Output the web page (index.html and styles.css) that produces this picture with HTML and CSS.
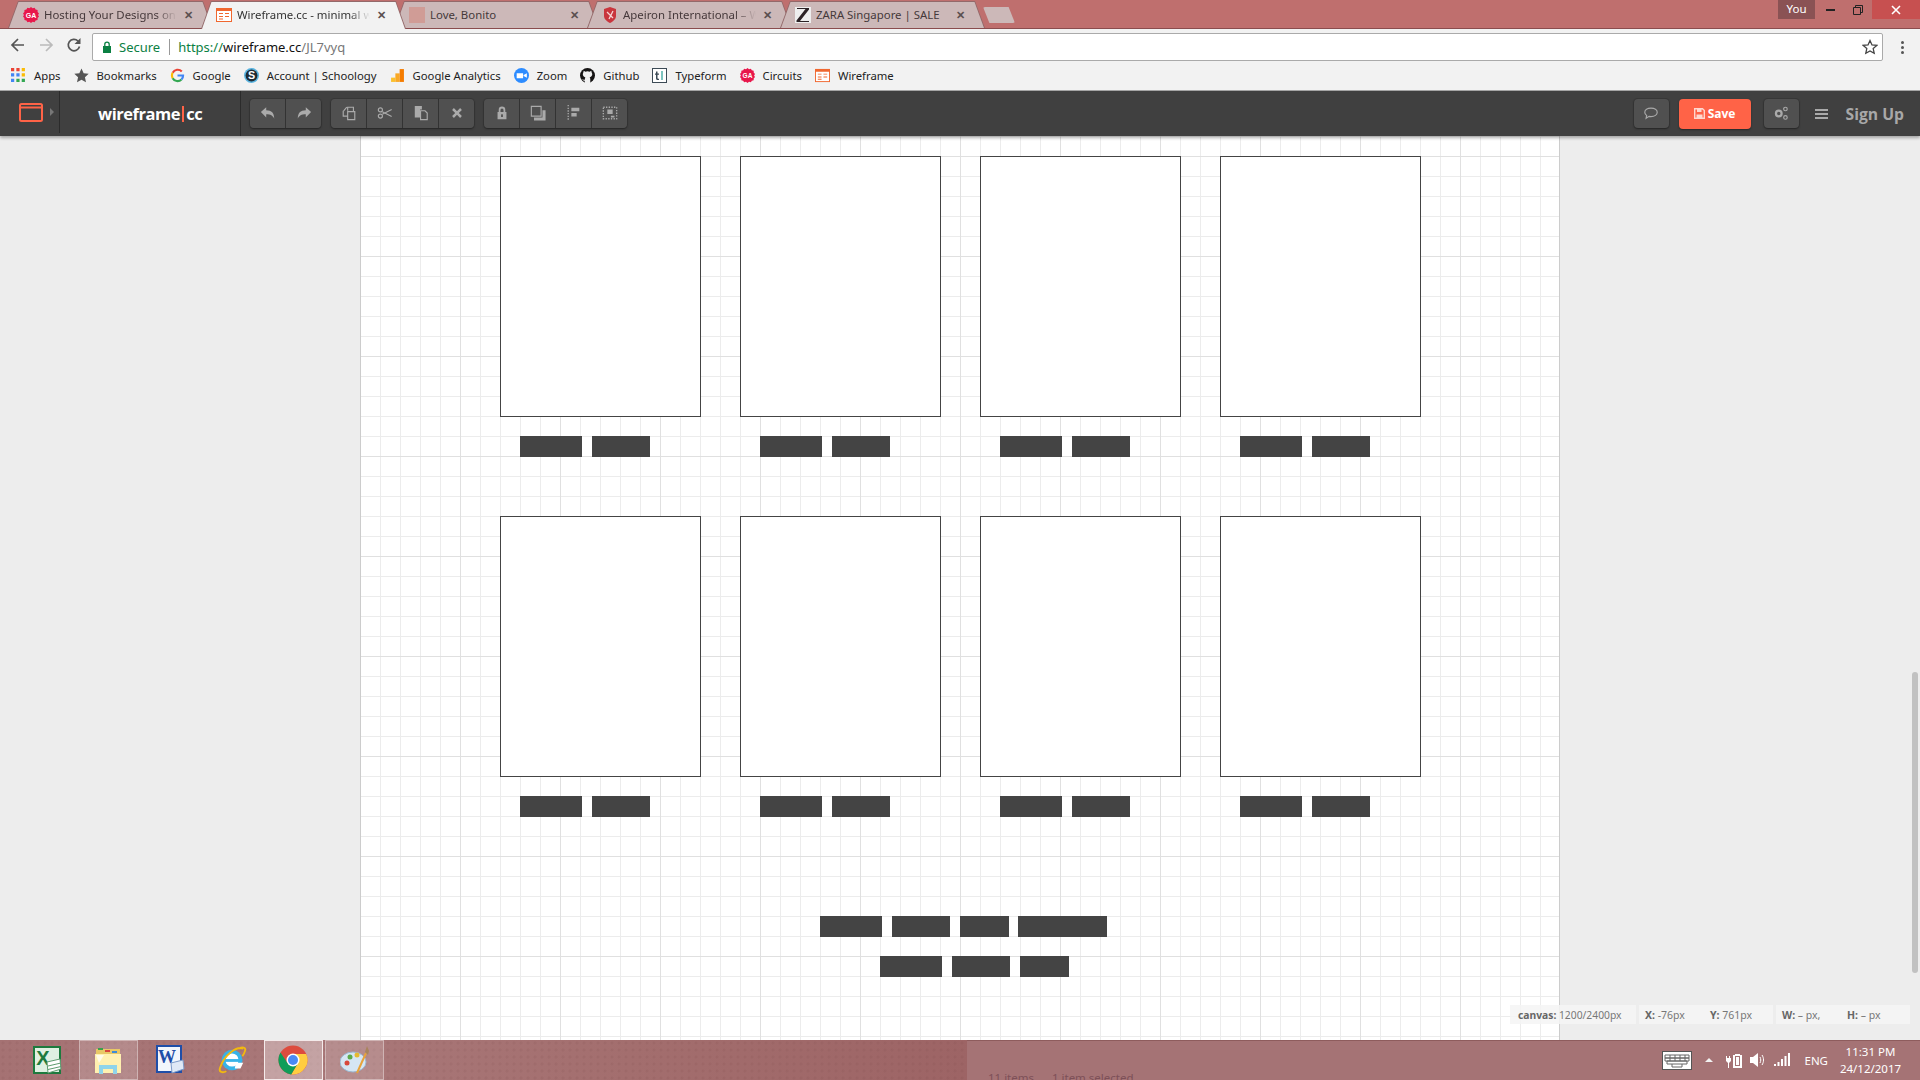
FILE: index.html
```html
<!DOCTYPE html>
<html lang="en">
<head>
    <meta charset="UTF-8">
    <title>Wireframe.cc - minimal wireframing tool</title>
    <link rel="stylesheet" href="styles.css">
</head>
<body>
    <div class="tabstrip">
        <div class="tab">
            <svg class="favicon" viewBox="0 0 16 16"><path fill="#e8174b" d="M8 0l1.600 1.300 2-.6 1 1.800 2 .4v2l1.400 1.500-1 1.600 1 1.600-1.400 1.500v2l-2 .4-1 1.800-2-.6L8 16l-1.600-1.300-2 .6-1-1.800-2-.4v-2L0 9.600l1-1.600-1-1.600 1.400-1.500v-2l2-.4 1-1.800 2 .6z"/><text x="8" y="11" class="badge-text">GA</text></svg>
            <span class="tab-title fade">Hosting Your Designs on</span>
            <span class="tab-close">✕</span>
        </div>
        <div class="tab active">
            <svg class="favicon" viewBox="0 0 16 16"><rect x=".5" y="1.500" width="15" height="13" fill="#fff" stroke="#f0672f"/><path fill="#f0672f" d="M0 1h16v3H0zM3 6h4v1H3zM9 6h4v1H9zM3 9h4v1H3zM9 9h4v1H9zM3 11.500h4v1H3z"/></svg>
            <span class="tab-title fade">Wireframe.cc - minimal w</span>
            <span class="tab-close">✕</span>
        </div>
        <div class="tab">
            <span class="favicon favicon-blank"></span>
            <span class="tab-title">Love, Bonito</span>
            <span class="tab-close">✕</span>
        </div>
        <div class="tab">
            <svg class="favicon" viewBox="0 0 16 16"><path fill="#c9353d" d="M2 2l6-2 6 2v7c0 3-3 5.500-6 7-3-1.500-6-4-6-7z"/><path fill="none" stroke="#f6d5d5" stroke-width="1.300" d="M5 5l6 6M11 4l-4 8"/></svg>
            <span class="tab-title fade">Apeiron International – W</span>
            <span class="tab-close">✕</span>
        </div>
        <div class="tab">
            <svg class="favicon" viewBox="0 0 16 16"><rect width="16" height="16" fill="#eee"/><path fill="#2c2226" d="M2 1h12v1.500L5 14h9v1H1.500v-1.500L10.500 2H2z"/></svg>
            <span class="tab-title">ZARA Singapore | SALE</span>
            <span class="tab-close">✕</span>
        </div>
        <div class="newtab"></div>
        <div class="window-controls">
            <span class="profile">You</span>
            <span class="win-btn"><svg width="9" height="2" viewBox="0 0 9 2"><rect width="9" height="2" fill="#222"/></svg></span>
            <span class="win-btn"><svg width="10" height="10" viewBox="0 0 10 10"><path fill="none" stroke="#222" d="M.5 2.500h7v7h-7zM2.500 2.500v-2h7v7h-2"/></svg></span>
            <span class="win-close"><svg width="10" height="10" viewBox="0 0 10 10"><path stroke="#fff" stroke-width="1.600" d="M1 1l8 8M9 1l-8 8"/></svg></span>
        </div>
    </div>

    <div class="navbar">
        <svg class="nav-icon" viewBox="0 0 16 16"><path fill="none" stroke="#555" stroke-width="1.700" d="M14 8H2.500M8 2L2 8l6 6"/></svg>
        <svg class="nav-icon" viewBox="0 0 16 16"><path fill="none" stroke="#bbb" stroke-width="1.700" d="M2 8h11.500M8 2l6 6-6 6"/></svg>
        <svg class="nav-icon" viewBox="0 0 16 16"><path fill="none" stroke="#555" stroke-width="1.700" d="M13.500 9.500A5.700 5.700 0 1 1 12 4"/><path fill="#555" d="M14.500 1v6h-6z"/></svg>
        <div class="omnibox">
            <svg class="lock" viewBox="0 0 10 12"><path fill="#0b8043" d="M1 5h8v7H1z"/><path fill="none" stroke="#0b8043" stroke-width="1.300" d="M2.800 5V3.300a2.200 2.200 0 0 1 4.400 0V5"/></svg>
            <span class="secure">Secure</span>
            <span class="url"><span class="url-scheme">https://</span>wireframe.cc<span class="url-path">/JL7vyq</span></span>
            <svg class="star" viewBox="0 0 16 16"><path fill="none" stroke="#444" stroke-width="1.300" d="M8 1.500l2 4.400 4.800.5-3.600 3.200 1 4.700L8 11.900l-4.200 2.400 1-4.700L1.200 6.400 6 5.900z"/></svg>
        </div>
        <div class="kebab"><i></i><i></i><i></i></div>
    </div>

    <div class="bookmarks">
        <a class="bookmark">
            <svg class="bm-icon" viewBox="0 0 14 14"><path fill="#ea4335" d="M0 0h3v3H0zM5 0h3v3H5z"/><path fill="#fbbc05" d="M10 0h3v3h-3zM10 5h3v3h-3z"/><path fill="#4285f4" d="M0 5h3v3H0zM5 5h3v3H5zM0 10h3v3H0z"/><path fill="#34a853" d="M5 10h3v3H5zM10 10h3v3h-3z"/></svg>Apps
        </a>
        <a class="bookmark">
            <svg class="bm-icon" viewBox="0 0 14 14"><path fill="#555" d="M7 .5l2 4.400 4.700.5-3.500 3.200 1 4.700L7 11l-4.200 2.300 1-4.700L.3 5.400 5 4.900z"/></svg>Bookmarks
        </a>
        <a class="bookmark">
            <svg class="bm-icon" viewBox="0 0 14 14"><path fill="none" stroke="#ea4335" stroke-width="2" d="M11 3.300A5.200 5.200 0 0 0 2.500 4.500"/><path fill="none" stroke="#fbbc05" stroke-width="2" d="M2.500 4.500a5.200 5.200 0 0 0 0 5"/><path fill="none" stroke="#34a853" stroke-width="2" d="M2.500 9.500a5.200 5.200 0 0 0 8.200 1.300"/><path fill="none" stroke="#4285f4" stroke-width="2" d="M10.700 10.800A5.200 5.200 0 0 0 12.200 7H7"/></svg>Google
        </a>
        <a class="bookmark">
            <svg class="bm-icon" viewBox="0 0 14 14"><circle cx="7" cy="7" r="7" fill="#5ab4e0"/><circle cx="7" cy="7" r="5.500" fill="#1f2a33"/><text x="7" y="10.500" class="s-text">S</text></svg>Account | Schoology
        </a>
        <a class="bookmark">
            <svg class="bm-icon" viewBox="0 0 14 14"><path fill="#fbc02d" d="M1 9h4v4H1z"/><path fill="#f9a825" d="M5 5h4v8H5z"/><path fill="#f57c00" d="M9 1h4v12H9z"/></svg>Google Analytics
        </a>
        <a class="bookmark">
            <svg class="bm-icon" viewBox="0 0 14 14"><circle cx="7" cy="7" r="7" fill="#2d8cff"/><path fill="#fff" d="M2.500 5h6v4.500h-6zM9 6.500l3-1.500v4L9 7.500z"/></svg>Zoom
        </a>
        <a class="bookmark">
            <svg class="bm-icon" viewBox="0 0 14 14"><circle cx="7" cy="7" r="7" fill="#161414"/><path fill="#f1f1f1" d="M3.500 2.500L5 3.500a5 5 0 0 1 4 0l1.500-1 .5 2c1 1.500.5 3.500-2 4.300.5.500.6 1 .6 2V14H4.400v-2.200c-1.400.2-2-.8-2.400-1.600.8.400 1.500 1.200 2.400.8 0-.6.200-1.300.600-2.200C2.500 8 2.200 6 3 4.500z"/></svg>Github
        </a>
        <a class="bookmark">
            <svg class="bm-icon" viewBox="0 0 15 15"><rect x=".5" y=".5" width="14" height="14" fill="#fff" stroke="#3c4a55"/><path fill="#3c4a55" d="M4 3.500h1.500v2H7v1.200H5.500V10c0 .6.400.8 1.500.7V12c-2 .2-3-.3-3-1.800V6.700H3V5.500h1z"/><path fill="#7cc4bf" d="M9 3h2v9H9z"/></svg>Typeform
        </a>
        <a class="bookmark">
            <svg class="bm-icon" viewBox="0 0 16 16"><path fill="#e8174b" d="M8 0l1.600 1.300 2-.6 1 1.800 2 .4v2l1.400 1.500-1 1.600 1 1.600-1.400 1.500v2l-2 .4-1 1.800-2-.6L8 16l-1.600-1.300-2 .6-1-1.800-2-.4v-2L0 9.600l1-1.600-1-1.600 1.400-1.500v-2l2-.4 1-1.800 2 .6z"/><text x="8" y="11" class="badge-text">GA</text></svg>Circuits
        </a>
        <a class="bookmark">
            <svg class="bm-icon" viewBox="0 0 16 16"><rect x=".5" y="1.500" width="15" height="13" fill="#fff" stroke="#f0672f"/><path fill="#f0672f" d="M0 1h16v3H0zM3 6h4v1H3zM9 6h4v1H9zM3 9h4v1H3zM9 9h4v1H9zM3 11.500h4v1H3z"/></svg>Wireframe
        </a>
    </div>

    <div class="toolbar">
        <div class="logo-cell">
            <svg class="logo-icon" width="24" height="19" viewBox="0 0 24 19"><path fill="none" stroke="#ff6347" stroke-width="2" d="M1 2.500a1.500 1.500 0 0 1 1.500-1.500h19a1.500 1.500 0 0 1 1.500 1.500v14a1.500 1.500 0 0 1-1.500 1.500h-19a1.500 1.500 0 0 1-1.500-1.500zM1 4.500h22"/></svg>
            <span class="logo-arrow"></span>
        </div>
        <div class="brand"><b>wireframe</b><span class="brand-bar"></span><b>cc</b></div>
        <div class="tool-group group-two">
            <span class="tool"><svg viewBox="0 0 18 18"><path d="M1 8l6-5.500V6c6 0 9 3 9 9.500-1.500-3.500-4-5-9-5V14z"/></svg></span>
            <span class="tool"><svg viewBox="0 0 18 18"><path d="M17 8l-6-5.500V6c-6 0-9 3-9 9.500 1.500-3.500 4-5 9-5V14z"/></svg></span>
        </div>
        <div class="tool-group">
            <span class="tool"><svg viewBox="0 0 18 18"><path class="line" d="M7.500 6.500V2.500h4l2.500 0v5M3 6.500l3.500-4M7.500 7.500H13.500l2 0v9H7.500zM7.500 12.500H2.500V6.500"/></svg></span>
            <span class="tool"><svg viewBox="0 0 18 18"><path class="line" d="M6 7.500L16.500 13M6 10.500L16.500 5"/><circle class="line" cx="3.800" cy="5.500" r="2.300"/><circle class="line" cx="3.800" cy="12.500" r="2.300"/></svg></span>
            <span class="tool"><svg viewBox="0 0 18 18"><path d="M2 1h8v4H8v9H2z"/><path class="line" d="M8.500 6.500h5l2.500 2.500v7.500H8.500z"/></svg></span>
            <span class="tool"><svg viewBox="0 0 18 18"><path d="M5.500 3.500L9 7l3.500-3.500 2 2L11 9l3.500 3.500-2 2L9 11l-3.500 3.500-2-2L7 9 3.500 5.500z"/></svg></span>
        </div>
        <div class="tool-group">
            <span class="tool"><svg viewBox="0 0 18 18"><path d="M4 8h10v8H4z"/><path class="line thick" d="M6.300 8V5.500a2.700 2.700 0 0 1 5.400 0V8"/><rect x="8" y="10.500" width="2" height="3" fill="#505050"/></svg></span>
            <span class="tool"><svg viewBox="0 0 18 18"><path class="line" d="M1.500 1.500h11v11h-11z"/><path d="M14 6h3.500v11.500h-13V14H14z"/></svg></span>
            <span class="tool"><svg viewBox="0 0 18 18"><path d="M6 3h9v4H6zM6 9h6v4H6z"/><path class="line dotted" d="M2.500 0v18"/></svg></span>
            <span class="tool"><svg viewBox="0 0 18 18"><path class="line dotted" d="M1.500 2.500h15v13h-15z"/><path d="M6 5h6v5H6zM10 12h4v2h-4z"/></svg></span>
        </div>
        <div class="toolbar-right">
            <span class="tool tool-solo"><svg viewBox="0 0 18 18"><path class="line" d="M9 3.500c4 0 7 2 7 4.700S13 13 9 13c-.8 0-1.500 0-2.200-.2L3.500 15l.6-3.300C2.800 11 2 9.700 2 8.200 2 5.500 5 3.500 9 3.500z"/></svg></span>
            <span class="save-btn">
                <svg width="11" height="11" viewBox="0 0 11 11"><path fill="none" stroke="#ffd8cf" stroke-width="1.400" d="M.7.7h7.800l1.800 1.800v7.800H.7z"/><path fill="#ffd8cf" d="M3 1h4.500v3H3zM2.500 6.500h6V10h-6z"/></svg>Save
            </span>
            <span class="tool tool-solo"><svg viewBox="0 0 18 18"><circle cx="6.500" cy="9.500" r="3.200" fill="none" stroke="#aaa" stroke-width="2.500"/><circle class="line" cx="14" cy="4.500" r="2"/><circle class="line" cx="14" cy="14" r="2"/></svg></span>
            <span class="hamburger"><i></i><i></i><i></i></span>
            <span class="signup">Sign Up</span>
        </div>
    </div>

    <div class="workspace">
        <div class="canvas">
            <div class="card-grid">
                <div class="cell"><div class="card"></div><div class="btn-row"><span class="bar w62"></span><span class="bar w58"></span></div></div>
                <div class="cell"><div class="card"></div><div class="btn-row"><span class="bar w62"></span><span class="bar w58"></span></div></div>
                <div class="cell"><div class="card"></div><div class="btn-row"><span class="bar w62"></span><span class="bar w58"></span></div></div>
                <div class="cell"><div class="card"></div><div class="btn-row"><span class="bar w62"></span><span class="bar w58"></span></div></div>
                <div class="cell"><div class="card"></div><div class="btn-row"><span class="bar w62"></span><span class="bar w58"></span></div></div>
                <div class="cell"><div class="card"></div><div class="btn-row"><span class="bar w62"></span><span class="bar w58"></span></div></div>
                <div class="cell"><div class="card"></div><div class="btn-row"><span class="bar w62"></span><span class="bar w58"></span></div></div>
                <div class="cell"><div class="card"></div><div class="btn-row"><span class="bar w62"></span><span class="bar w58"></span></div></div>
            </div>
            <div class="footer-row first">
                <span class="bar w62"></span><span class="bar w58"></span><span class="bar w49"></span><span class="bar w89"></span>
            </div>
            <div class="footer-row second">
                <span class="bar w62"></span><span class="bar w58"></span><span class="bar w49"></span>
            </div>
        </div>
        <div class="scroll-thumb"></div>
        <div class="status">
            <span class="chip chip-canvas"><b>canvas:</b> 1200/2400px</span>
            <span class="chip chip-pair"><span class="stat"><b>X:</b> -76px</span><span><b>Y:</b> 761px</span></span>
            <span class="chip chip-pair"><span class="stat"><b>W:</b> – px,</span><span><b>H:</b> – px</span></span>
        </div>
    </div>

    <div class="taskbar">
        <div class="task-left">
            <span class="task-item">
                <svg viewBox="0 0 30 30"><path fill="#1d7a3e" d="M1 1h28v28H1z"/><path fill="#dff0e2" d="M3 3h24v24H3z"/><text x="11" y="20" class="excel-text">X</text><path fill="#fff" stroke="#5e9c70" d="M15 17l13-3 1 10-13 4z"/><path stroke="#5e9c70" d="M16 21l13-3M16 24.500l13-3"/></svg>
            </span>
            <span class="task-item open">
                <svg viewBox="0 0 30 30"><path fill="#e8c866" d="M3 4h24v8H3z"/><path fill="#3aa04b" d="M5 3h5v2H5z"/><path fill="#d8463c" d="M12 5h5v2h-5z"/><path fill="#3d8cd8" d="M19 6h5v2h-5z"/><path fill="#fff0b0" d="M2 9h26v19H2z"/><path fill="#8fd4ea" d="M6 20h18v9h-4v-5H10v5H6z"/><path fill="#fff" opacity=".7" d="M3 10l8 0-5 8z"/></svg>
            </span>
            <span class="task-item">
                <svg viewBox="0 0 30 30"><path fill="#1f4ea8" d="M1 0h26v28H1z"/><path fill="#f2f6fc" d="M3 2h22v24H3z"/><text x="12" y="18" class="word-text">W</text><path fill="#dfe9f6" stroke="#7d9bc8" d="M16 18l12-3 1 9-12 4z"/></svg>
            </span>
            <span class="task-item">
                <svg viewBox="0 0 32 30"><circle cx="16" cy="15" r="11" fill="#37b3e8"/><circle cx="16" cy="15" r="7" fill="#fff"/><path fill="#37b3e8" d="M7 14h20v3H7z"/><path fill="#fff" d="M20 18h8l-3 6h-6z"/><path fill="none" stroke="#f2b90f" stroke-width="2" d="M28 3C22 0 8 8 3 24c-1 4 3 5 7 3M23 3c4-2 8-2 7 2-.5 2-1.500 4-3 6"/></svg>
            </span>
            <span class="task-item active">
                <svg viewBox="0 0 30 30"><circle cx="15" cy="15" r="14.500" fill="#dd4b3e"/><path fill="#ffcd40" d="M15 9h13.200a14.500 14.500 0 0 1-15 20.400L20 18z"/><path fill="#0f9d58" d="M2.500 7.500A14.500 14.500 0 0 0 13.200 29.400L20 18l-5 3-5.500-3z"/><circle cx="15" cy="15" r="6.500" fill="#fff"/><circle cx="15" cy="15" r="5" fill="#4a8af4"/></svg>
            </span>
            <span class="task-item open">
                <svg viewBox="0 0 30 30"><ellipse cx="13" cy="17" rx="13" ry="10" fill="#d5e6f3" stroke="#9cb8d0"/><circle cx="7" cy="18" r="2.500" fill="#d8483c"/><circle cx="10" cy="12" r="2.500" fill="#5caa4a"/><circle cx="17" cy="10" r="2.500" fill="#e5b92f"/><path stroke="#e8a33a" stroke-width="2" d="M17 28L26 8"/><path fill="#a9845d" d="M25 7l2-6 2 5-1 4z"/></svg>
            </span>
        </div>
        <div class="task-right">
            <span class="explorer-status">11 items &nbsp;&nbsp;&nbsp;&nbsp; 1 item selected</span>
            <div class="tray">
                <svg class="tray-keyboard" viewBox="0 0 30 19"><rect x=".5" y=".5" width="29" height="18" fill="#fff" stroke="#555"/><path fill="none" stroke="#666" d="M3 4h24v3H3zM3 7h24v3H3zM5 10h20v3H5zM8 4v6M13 4v6M18 4v6M23 4v6M10 13v3h10v-3"/></svg>
                <span class="tray-arrow"></span>
                <svg class="tray-icon" viewBox="0 0 16 16"><path fill="#fff" d="M9 2h5v1h2v13H7V3h2z"/><path fill="#a57375" d="M9 4h5v10H9z"/><path fill="#fff" d="M10 5h3v8h-3zM0 4h1v2h2V4h1v2h1v3L3 11v5H2v-5L0 9V6z"/></svg>
                <svg class="tray-icon" viewBox="0 0 16 16"><path fill="#fff" d="M0 5h3l5-4v14l-5-4H0z"/><path fill="none" stroke="#fff" d="M10 5c1 2 1 4 0 6M12 3c2 3 2 7 0 10"/></svg>
                <svg class="tray-icon" viewBox="0 0 16 16"><path fill="#fff" d="M0 12h2v2H0zM3.500 10h2v4h-2zM7 7h2v7H7zM10.500 4h2v10h-2zM14 1h2v13h-2z"/></svg>
                <span class="tray-lang">ENG</span>
                <span class="clock"><span>11:31 PM</span><span>24/12/2017</span></span>
            </div>
        </div>
    </div>
</body>
</html>
```

FILE: styles.css
```css
* {
    box-sizing: border-box;
}
html, body {
    margin: 0;
    height: 100%;
}
body {
    width: 1920px;
    height: 1080px;
    display: flex;
    flex-direction: column;
    overflow: hidden;
    font-family: "Noto Sans", "Open Sans", sans-serif;
    color: #222;
    background: #ededed;
}

/* tab strip */
.tabstrip {
    height: 29px;
    flex: none;
    display: flex;
    align-items: flex-start;
    padding: 1px 0 0 8px;
    background: #bf6f6e;
    border-bottom: 1px solid #8a4c4e;
}
.tab {
    position: relative;
    width: 205px;
    height: 27px;
    margin-right: -12px;
    padding: 0 15px;
    display: flex;
    align-items: center;
    flex: none;
    font-size: 11.400px;
    color: #45383a;
}
.tab::before, .tab::after {
    content: "";
    position: absolute;
    inset: 0;
    z-index: 0;
}
.tab::before {
    background: #93696a;
    clip-path: polygon(10px 0, calc(100% - 10px) 0, 100% 100%, 0 100%);
}
.tab::after {
    background: #ccb8b8;
    clip-path: polygon(10.500px 1px, calc(100% - 10.500px) 1px, calc(100% - 1px) 100%, 1px 100%);
}
.tab > * {
    position: relative;
    z-index: 1;
}
.tab.active {
    height: 28px;
    padding-bottom: 1px;
    z-index: 2;
    color: #333;
}
.tab.active::after {
    background: #f2f2f2;
}
.favicon {
    width: 16px;
    height: 16px;
    flex: none;
    margin-right: 5px;
}
.favicon-blank {
    background: #d09c96;
}
.badge-text {
    font: bold 7px "Liberation Sans", sans-serif;
    fill: #fff;
    text-anchor: middle;
}
.tab-title {
    width: 133px;
    flex: none;
    white-space: nowrap;
    overflow: hidden;
}
.tab-title.fade {
    -webkit-mask-image: linear-gradient(to right, #000 84%, transparent 100%);
    mask-image: linear-gradient(to right, #000 84%, transparent 100%);
}
.tab-close {
    margin-left: 7px;
    font-size: 11px;
    font-weight: bold;
    color: #5a5050;
}
.newtab {
    width: 32px;
    height: 16px;
    margin: 6px 0 0 10px;
    flex: none;
    background: #ccb8b8;
    clip-path: polygon(0 0, 80% 0, 100% 100%, 20% 100%);
    border-radius: 2px;
}
.window-controls {
    margin: -1px 0 0 auto;
    display: flex;
    align-items: center;
    height: 19px;
}
.profile {
    width: 37px;
    height: 19px;
    margin-right: 2px;
    text-align: center;
    font-size: 11.500px;
    line-height: 18px;
    color: #fff;
    background: #8a5254;
}
.win-btn {
    width: 27px;
    display: flex;
    justify-content: center;
}
.win-close {
    width: 48px;
    height: 19px;
    margin-left: 1px;
    display: flex;
    align-items: center;
    justify-content: center;
    background: #c75050;
}

/* address row */
.navbar {
    height: 32px;
    flex: none;
    display: flex;
    align-items: center;
    padding-left: 10px;
    background: #f2f2f2;
}
.nav-icon {
    width: 16px;
    height: 16px;
    margin-right: 12px;
    flex: none;
}
.omnibox {
    width: 1791px;
    height: 28px;
    margin: 4px 0 0 -2px;
    padding: 0 4px 0 9px;
    display: flex;
    align-items: center;
    font-size: 13px;
    background: #fff;
    border: 1px solid #aaa;
    border-radius: 2px;
}
.lock {
    width: 10px;
    height: 12px;
    margin-right: 7px;
}
.secure {
    padding-right: 9px;
    margin-right: 8px;
    color: #0b8043;
    border-right: 1px solid #999;
    line-height: 16px;
}
.url {
    flex: 1;
    color: #111;
}
.url-scheme {
    color: #0b8043;
}
.url-path {
    color: #777;
}
.star {
    width: 16px;
    height: 16px;
}
.kebab {
    margin: 4px 0 0 18px;
    display: flex;
    flex-direction: column;
    gap: 2px;
}
.kebab i {
    width: 3px;
    height: 3px;
    border-radius: 50%;
    background: #555;
}

/* bookmarks */
.bookmarks {
    height: 30px;
    flex: none;
    display: flex;
    align-items: center;
    gap: 13px;
    padding-left: 11px;
    background: #f2f2f2;
    border-bottom: 1px solid #a8a8a8;
    font-size: 11.300px;
    color: #222;
}
.bookmark {
    display: flex;
    align-items: center;
    gap: 8px;
}
.bm-icon {
    width: 15px;
    height: 15px;
    flex: none;
}
.s-text {
    font: bold 10px "Liberation Sans", sans-serif;
    fill: #fff;
    text-anchor: middle;
}
.word-text {
    font: bold 18px "Liberation Serif", serif;
    fill: #1f4ea8;
    text-anchor: middle;
}
.excel-text {
    font: bold 20px "Liberation Sans", sans-serif;
    fill: #1d7a3e;
    text-anchor: middle;
}

/* app toolbar */
.toolbar {
    position: relative;
    z-index: 3;
    height: 45px;
    flex: none;
    display: flex;
    align-items: center;
    background: #404040;
    box-shadow: 0 2px 3px rgba(0, 0, 0, .3);
}
.logo-cell {
    width: 60px;
    height: 42px;
    margin-top: -3px;
    padding-left: 19px;
    flex: none;
    display: flex;
    align-items: center;
    border-right: 1px solid #2b2b2b;
}
.logo-arrow {
    width: 0;
    height: 0;
    margin-left: 7px;
    border-left: 4px solid #777;
    border-top: 4px solid transparent;
    border-bottom: 4px solid transparent;
}
.brand {
    width: 181px;
    height: 45px;
    flex: none;
    padding-left: 38px;
    display: flex;
    align-items: center;
    font-family: "Open Sans", sans-serif;
    font-size: 16.500px;
    letter-spacing: -.45px;
    color: #fff;
    border-right: 1px solid #2b2b2b;
}
.brand-bar {
    width: 2px;
    height: 16px;
    margin: 0 2px;
    background: #ff6347;
}
.tool-group {
    width: 143px;
    margin-left: 10px;
    display: flex;
    border-radius: 4px;
    overflow: hidden;
    box-shadow: 0 1px 2px #262626, 0 0 0 1px #383838;
}
.group-two {
    width: 71px;
    margin-left: 9px;
}
.tool {
    flex: 1;
    height: 29px;
    display: flex;
    align-items: center;
    justify-content: center;
    background: #505050;
    border-right: 1px solid #333;
}
.tool:last-child {
    border-right: 0;
}
.tool svg {
    width: 16px;
    height: 16px;
    margin-top: -1px;
    fill: #aaa;
}
.tool .line {
    fill: none;
    stroke: #aaa;
    stroke-width: 1.300;
}
.tool .thick {
    stroke-width: 2;
}
.tool .dotted {
    stroke-width: 1.500;
    stroke-dasharray: 1.500 1.500;
}
.toolbar-right {
    margin-left: auto;
    display: flex;
    align-items: center;
}
.tool-solo {
    flex: none;
    width: 35px;
    border-right: 0;
    border-radius: 4px;
    box-shadow: 0 1px 2px #262626, 0 0 0 1px #383838;
}
.save-btn {
    width: 72px;
    height: 30px;
    margin: 0 13px 0 10px;
    display: flex;
    align-items: center;
    justify-content: center;
    gap: 3px;
    font-family: "Open Sans", sans-serif;
    font-size: 12px;
    font-weight: 700;
    color: #fff;
    background: #ff6347;
    border-radius: 4px;
    box-shadow: 0 1px 2px #262626;
}
.hamburger {
    margin-left: 16px;
    display: flex;
    flex-direction: column;
    gap: 2px;
}
.hamburger i {
    width: 13px;
    height: 2px;
    background: #aaa;
}
.signup {
    margin: 0 16px 0 18px;
    font-family: "Open Sans", sans-serif;
    font-size: 15.700px;
    font-weight: 700;
    color: #a8a8a8;
}

/* workspace */
.workspace {
    position: relative;
    flex: 1;
    overflow: hidden;
    background: #ededed;
}
.canvas {
    width: 1200px;
    height: 904px;
    margin-left: 360px;
    padding: 20px 0 0 140px;
    background-color: #fff;
    background-image:
        linear-gradient(to right, #e0e0e0 1px, transparent 1px),
        linear-gradient(to bottom, #e0e0e0 1px, transparent 1px),
        linear-gradient(to right, #ececec 1px, transparent 1px),
        linear-gradient(to bottom, #ececec 1px, transparent 1px);
    background-size: 100px 100px, 100px 100px, 20px 20px, 20px 20px;
    background-position: 0 0, 0 20px, 0 0, 0 0;
    box-shadow: inset 1px 0 #ccc, inset -1px 0 #ccc;
}
.card-grid {
    display: grid;
    grid-template-columns: repeat(4, 201px);
    column-gap: 39px;
    row-gap: 59px;
}
.card {
    height: 261px;
    background: #fff;
    border: 1px solid #444;
}
.btn-row {
    margin-top: 19px;
    padding-left: 20px;
    display: flex;
    gap: 10px;
}
.bar {
    height: 21px;
    background: #444;
}
.w62 { width: 62px; }
.w58 { width: 58px; }
.w49 { width: 49px; }
.w89 { width: 89px; margin-left: -1px; }
.footer-row {
    display: flex;
    gap: 10px;
}
.footer-row.first {
    margin: 99px 0 0 320px;
}
.footer-row.second {
    margin: 19px 0 0 380px;
}
.scroll-thumb {
    position: absolute;
    top: 536px;
    left: 1912px;
    width: 6px;
    height: 301px;
    background: #c1c1c1;
    border-radius: 3px;
}
.status {
    position: absolute;
    top: 869px;
    left: 1510px;
    display: flex;
    gap: 3px;
    font-size: 10.500px;
    color: #777;
}
.status b {
    color: #666;
}
.chip {
    height: 19px;
    line-height: 20px;
    background: rgba(245, 245, 245, .85);
}
.chip-canvas {
    width: 126px;
    padding-left: 8px;
    font-size: 10.300px;
}
.chip-pair {
    width: 134px;
    padding-left: 6px;
    display: flex;
}
.stat {
    width: 65px;
}

/* windows taskbar */
.taskbar {
    height: 40px;
    flex: none;
    display: flex;
    color: #fff;
    background: #a57375;
    box-shadow: inset 0 1px rgba(120, 70, 70, .5);
}
.task-left {
    width: 967px;
    flex: none;
    display: flex;
    padding-left: 17px;
    background-image:
        radial-gradient(circle at 3px 3px, rgba(90, 40, 40, .07) 1px, transparent 2px),
        linear-gradient(100deg, #a57273 0%, #a97879 35%, #a36e6e 65%, #9d6465 100%);
    background-size: 7px 7px, 100% 100%;
}
.task-item {
    width: 59px;
    height: 40px;
    margin-right: 2.700px;
    flex: none;
    display: flex;
    align-items: center;
    justify-content: center;
    border: 1px solid transparent;
}
.task-item svg {
    width: 30px;
    height: 30px;
}
.task-item.open {
    background: rgba(255, 255, 255, .16);
    border-color: rgba(255, 255, 255, .35);
}
.task-item.active {
    background: rgba(255, 255, 255, .32);
    border: 1px solid #f4eaea;
}
.task-right {
    flex: 1;
    display: flex;
    justify-content: space-between;
    padding-left: 21px;
    overflow: hidden;
}
.explorer-status {
    margin-top: 30px;
    font-size: 11.500px;
    color: #7d5058;
    white-space: nowrap;
}
.tray {
    display: flex;
    align-items: center;
    padding-right: 20px;
}
.tray-keyboard {
    width: 30px;
    height: 19px;
    margin-right: 13px;
}
.tray-arrow {
    width: 0;
    height: 0;
    margin-right: 13px;
    border-left: 4px solid transparent;
    border-right: 4px solid transparent;
    border-bottom: 4px solid #f2f2f2;
}
.tray-icon {
    width: 16px;
    height: 16px;
    margin-right: 8px;
}
.tray-lang {
    margin: 0 13px 0 6px;
    font-size: 11.500px;
}
.clock {
    width: 59px;
    display: flex;
    flex-direction: column;
    align-items: center;
    gap: 1px;
    font-size: 11.500px;
    line-height: 16px;
}
```
